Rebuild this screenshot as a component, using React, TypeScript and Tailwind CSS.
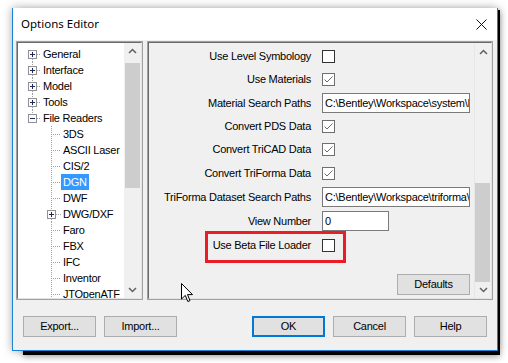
import React from "react";

const UI_FONT = "font-['Liberation_Sans',Arial,sans-serif] text-[11px] tracking-[-0.25px]";

const topItems = ["General", "Interface", "Model", "Tools", "File Readers"];
const childItems = [
  { name: "3DS" },
  { name: "ASCII Laser" },
  { name: "CIS/2" },
  { name: "DGN", selected: true },
  { name: "DWF" },
  { name: "DWG/DXF", expandable: true },
  { name: "Faro" },
  { name: "FBX" },
  { name: "IFC" },
  { name: "Inventor" },
  { name: "JTOpenATF" },
];

const dots = { stroke: "#a0a0a0", strokeDasharray: "1 1", strokeWidth: 1 };

const ExpandBox = ({ x, open }: { x: number; open: boolean }) => (
  <>
    <rect x={x + 0.5} y={4.5} width={8} height={8} fill="#fbfbfb" stroke="#919191" />
    <line x1={x + 2} x2={x + 7} y1={8.5} y2={8.5} stroke="#1c2a55" />
    {!open && <line x1={x + 4.5} x2={x + 4.5} y1={6} y2={11} stroke="#1c2a55" />}
  </>
);

const TopGutter = ({ first, last, open }: { first: boolean; last: boolean; open: boolean }) => (
  <svg width="23" height="16" className="shrink-0">
    {!first && <line x1={14.5} x2={14.5} y1={0} y2={4} {...dots} />}
    {!last && <line x1={14.5} x2={14.5} y1={13} y2={16} {...dots} />}
    <line x1={19} x2={23} y1={8.5} y2={8.5} {...dots} />
    <ExpandBox x={10} open={open} />
  </svg>
);

const ChildGutter = ({ box }: { box?: boolean }) => (
  <svg width="43" height="16" className="shrink-0">
    {box ? (
      <>
        <line x1={33.5} x2={33.5} y1={0} y2={4} {...dots} />
        <line x1={33.5} x2={33.5} y1={13} y2={16} {...dots} />
        <line x1={38} x2={43} y1={8.5} y2={8.5} {...dots} />
        <ExpandBox x={29} open={false} />
      </>
    ) : (
      <>
        <line x1={33.5} x2={33.5} y1={0} y2={16} {...dots} />
        <line x1={35} x2={43} y1={8.5} y2={8.5} {...dots} />
      </>
    )}
  </svg>
);

const Chevron = ({ down }: { down?: boolean }) => (
  <svg width="9" height="6" viewBox="0 0 9 6">
    <path
      d={down ? "M1 1 L4.5 4.5 L8 1" : "M1 5 L4.5 1.5 L8 5"}
      fill="none"
      stroke="#606060"
      strokeWidth="1.5"
    />
  </svg>
);

const Check = ({ checked }: { checked?: boolean }) => (
  <div
    className={`w-[13px] h-[13px] bg-white border flex items-center justify-center ${
      checked ? "border-[#6f6f6f]" : "border-[#333333]"
    }`}
  >
    {checked && (
      <svg width="11" height="11" viewBox="0 0 11 11">
        <path d="M1.5 5.5 L4 8 L9.5 2.5" fill="none" stroke="#6a6a6a" strokeWidth="1" />
      </svg>
    )}
  </div>
);

const TextBox = ({ value, w }: { value: string; w: string }) => (
  <div className={`${w} h-[20px] bg-white border border-[#7a7a7a] pl-[2px] leading-[18px] overflow-hidden whitespace-nowrap`}>
    {value}
  </div>
);

const rows: { label: string; h: string; control: React.ReactNode }[] = [
  { label: "Use Level Symbology", h: "h-[22px]", control: <Check /> },
  { label: "Use Materials", h: "h-[24px]", control: <Check checked /> },
  {
    label: "Material Search Paths",
    h: "h-[24px]",
    control: <TextBox w="w-[148px]" value="C:\Bentley\Workspace\system\Materials" />,
  },
  { label: "Convert PDS Data", h: "h-[23px]", control: <Check checked /> },
  { label: "Convert TriCAD Data", h: "h-[23px]", control: <Check checked /> },
  { label: "Convert TriForma Data", h: "h-[24px]", control: <Check checked /> },
  {
    label: "TriForma Dataset Search Paths",
    h: "h-[24px]",
    control: <TextBox w="w-[148px]" value="C:\Bentley\Workspace\triforma\dataset" />,
  },
  { label: "View Number", h: "h-[24px]", control: <TextBox w="w-[67px]" value="0" /> },
  { label: "Use Beta File Loader", h: "h-[24px]", control: <Check /> },
];

const Button = ({ label, primary }: { label: string; primary?: boolean }) => (
  <div
    className={`w-[73px] h-[21px] bg-[#e1e1e1] flex items-center justify-center ${
      primary ? "border-2 border-[#0078d7]" : "border border-[#adadad]"
    }`}
  >
    {label}
  </div>
);

const Sunken = ({ className, children }: { className: string; children: React.ReactNode }) => (
  <div className={`${className} h-full border border-[#a0a0a0]`}>
    <div className="h-full flex border border-t-[#696969] border-l-[#696969] border-r-[#e3e3e3] border-b-[#e3e3e3]">
      {children}
    </div>
  </div>
);

export default function App() {
  return (
    <div className={`relative w-[508px] h-[363px] bg-white overflow-hidden pt-[8px] pl-[12px] text-black ${UI_FONT}`}>
      {/* window behind */}
      <div className="absolute left-[23px] top-[10px] w-[477px] h-[345px] bg-black shadow-[0_2px_6px_rgba(0,0,0,0.3)]" />

      <div className="relative z-10 w-[486px] h-[343px] flex flex-col bg-[#f0f0f0] border-x border-b border-[#1883d7] shadow-[0_0_9px_rgba(0,0,0,0.35)]">
        {/* title bar */}
        <div className="h-[32px] bg-white flex items-center justify-between pl-[8px] pr-[10px]">
          <span className="font-['Noto_Sans',sans-serif] text-[11.5px] tracking-normal">Options Editor</span>
          <svg width="11" height="11" viewBox="0 0 11 11">
            <path d="M0.5 0.5 L10.5 10.5 M10.5 0.5 L0.5 10.5" stroke="#111" strokeWidth="1" />
          </svg>
        </div>

        {/* panels */}
        <div className="mt-[1px] ml-[3px] flex gap-[4px] h-[259px]">
          <Sunken className="w-[127px]">
            <div className="flex-1 bg-white overflow-hidden pt-[3px]">
              {topItems.map((t, i) => (
                <div key={t} className="flex h-[16px] items-center">
                  <TopGutter first={i === 0} last={i === topItems.length - 1} open={t === "File Readers"} />
                  <span className="px-[2px] leading-[16px] whitespace-nowrap">{t}</span>
                </div>
              ))}
              {childItems.map((c) => (
                <div key={c.name} className="flex h-[16px] items-center">
                  <ChildGutter box={c.expandable} />
                  <span
                    className={`px-[2px] leading-[16px] whitespace-nowrap ${
                      c.selected ? "bg-[#3399ff] text-white" : ""
                    }`}
                  >
                    {c.name}
                  </span>
                </div>
              ))}
            </div>
            <div className="w-[17px] shrink-0 bg-[#f0f0f0] flex flex-col">
              <div className="h-[20px] flex items-center justify-center pb-[4px]">
                <Chevron />
              </div>
              <div className="h-[125px] mx-[1px] bg-[#cdcdcd]" />
              <div className="flex-1" />
              <div className="h-[17px] flex items-center justify-center">
                <Chevron down />
              </div>
            </div>
          </Sunken>

          <Sunken className="w-[346px] relative">
            <div className="flex-1 flex flex-col pt-[2px]">
              {rows.map((r) => (
                <div key={r.label} className={`flex items-center ${r.h}`}>
                  <div className="w-[162px] text-right whitespace-nowrap">{r.label}</div>
                  <div className="ml-[11px]">{r.control}</div>
                </div>
              ))}
              <div className="mt-[17px] flex justify-end pr-[4px]">
                <Button label="Defaults" />
              </div>
            </div>
            <div className="w-[17px] shrink-0 bg-[#f0f0f0] border-l border-[#e6e6e6] flex flex-col">
              <div className="h-[17px] flex items-center justify-center">
                <Chevron />
              </div>
              <div className="flex-1" />
              <div className="h-[99px] mr-[1px] bg-[#cdcdcd]" />
              <div className="h-[16px] flex items-center justify-center">
                <Chevron down />
              </div>
            </div>
            {/* annotation */}
            <div className="absolute left-[57px] top-[189px] w-[141px] h-[32px] border-[3px] border-[#ec1c24]" />
          </Sunken>
        </div>

        {/* buttons */}
        <div className="mt-[16px] flex justify-between px-[10px]">
          <div className="flex gap-[8px]">
            <Button label="Export..." />
            <Button label="Import..." />
          </div>
          <div className="flex gap-[8px]">
            <Button label="OK" primary />
            <Button label="Cancel" />
            <Button label="Help" />
          </div>
        </div>
      </div>

      {/* mouse pointer */}
      <svg className="absolute left-[181px] top-[283px] z-20" width="13" height="20" viewBox="0 0 13 20">
        <path
          d="M0.5 0.5 L0.5 16 L4.3 12.4 L6.8 18.5 L9 17.6 L6.5 11.6 L11.5 11.6 Z"
          fill="#fff"
          stroke="#000"
          strokeWidth="1"
          strokeLinejoin="round"
        />
      </svg>
    </div>
  );
}
